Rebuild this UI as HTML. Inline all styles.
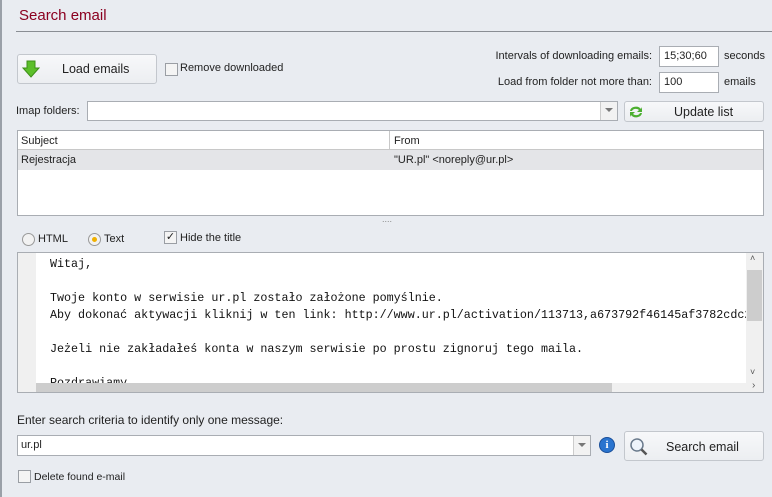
<!DOCTYPE html>
<html><head><meta charset="utf-8"><style>
*{box-sizing:border-box;margin:0;padding:0}
body{width:772px;height:497px;background:#e9ecf1;font-family:"Liberation Sans",sans-serif;font-size:11px;color:#222;position:relative;overflow:hidden}
.a{position:absolute;white-space:nowrap}
.btn{position:absolute;border:1px solid #c3c7cd;border-radius:3px;background:linear-gradient(#f7f8fa,#eceef1);font-size:12.5px}
.inp{position:absolute;background:#fff;border:1px solid #a9adb3}
.cb{position:absolute;width:13px;height:13px;border:1px solid #9a9ea4;background:#f4f4f4}
</style></head><body>
<div class="a" style="left:0;top:0;width:2px;height:497px;background:#9aa0a8"></div>
<div class="a" style="left:19px;top:7px;font-size:15px;color:#8b0020">Search email</div>
<div class="a" style="left:16px;top:31px;width:756px;height:1px;background:#8a8e94"></div>

<div class="btn" style="left:17px;top:54px;width:140px;height:30px">
<svg class="a" style="left:4px;top:5px" width="18" height="18" viewBox="0 0 18 18"><path d="M5 1h8v7h4l-8 9-8-9h4z" fill="#5cbf2a" stroke="#3d8f18" stroke-width="1"/></svg>
<span class="a" style="left:44px;top:7px">Load emails</span></div>
<div class="cb" style="left:165px;top:63px"></div>
<div class="a" style="left:180px;top:62px">Remove downloaded</div>

<div class="a" style="right:120px;top:50px">Intervals of downloading emails:</div>
<div class="inp" style="left:659px;top:46px;width:60px;height:21px"><span class="a" style="left:4px;top:3px">15;30;60</span></div>
<div class="a" style="left:724px;top:50px">seconds</div>
<div class="a" style="right:120px;top:76px">Load from folder not more than:</div>
<div class="inp" style="left:659px;top:72px;width:60px;height:21px"><span class="a" style="left:4px;top:3px">100</span></div>
<div class="a" style="left:724px;top:76px">emails</div>

<div class="a" style="left:16px;top:105px">Imap folders:</div>
<div class="inp" style="left:87px;top:101px;width:531px;height:20px"><div class="a" style="right:0;top:0;width:17px;height:18px;border-left:1px solid #ccc;background:#f2f2f2"><span class="a" style="left:4px;top:6px;border:4px solid transparent;border-top:4px solid #777;border-bottom:0"></span></div></div>
<div class="btn" style="left:624px;top:101px;width:140px;height:21px">
<svg class="a" style="left:3px;top:2px" width="16" height="16" viewBox="0 0 16 16"><path d="M2 7a6 5 0 0 1 11-2l1-2v5h-5l2-2a4 3 0 0 0-7 1z" fill="#4caf30"/><path d="M14 9a6 5 0 0 1-11 2l-1 2V8h5l-2 2a4 3 0 0 0 7-1z" fill="#4caf30"/></svg>
<span class="a" style="left:49px;top:3px">Update list</span></div>

<div class="a" style="left:17px;top:130px;width:747px;height:86px;background:#fff;border:1px solid #a9adb3"></div>
<div class="a" style="left:18px;top:131px;width:745px;height:19px;background:#fff;border-bottom:1px solid #c8c8c8"></div>
<div class="a" style="left:389px;top:131px;width:1px;height:19px;background:#c8c8c8"></div>
<div class="a" style="left:21px;top:135px">Subject</div>
<div class="a" style="left:394px;top:135px">From</div>
<div class="a" style="left:18px;top:150px;width:745px;height:20px;background:#e4e5e8"></div>
<div class="a" style="left:21px;top:154px">Rejestracja</div>
<div class="a" style="left:394px;top:154px">"UR.pl" &lt;noreply@ur.pl&gt;</div>
<div class="a" style="left:382px;top:214px;font-size:9px;color:#888">....</div>

<div class="a" style="left:22px;top:233px;width:13px;height:13px;border-radius:50%;border:1px solid #999;background:#f2f2f2"></div>
<div class="a" style="left:38px;top:233px">HTML</div>
<div class="a" style="left:88px;top:233px;width:13px;height:13px;border-radius:50%;border:1px solid #999;background:#f2f2f2"><div class="a" style="left:3px;top:3px;width:5px;height:5px;border-radius:50%;background:#f0b000"></div></div>
<div class="a" style="left:104px;top:233px">Text</div>
<div class="cb" style="left:164px;top:231px;font-size:11px;line-height:10px;text-align:center">✓</div>
<div class="a" style="left:180px;top:232px">Hide the title</div>

<div class="a" style="left:17px;top:252px;width:747px;height:141px;background:#fff;border:1px solid #a9adb3;overflow:hidden">
<div class="a" style="left:0;top:0;width:18px;height:130px;background:#f0f0f0"></div>
<pre class="a" style="left:32px;top:3px;white-space:pre;font-family:'Liberation Mono',monospace;font-size:11.7px;line-height:17px;color:#111">Witaj,

Twoje konto w serwisie ur.pl zostało założone pomyślnie.
Aby dokonać aktywacji kliknij w ten link: http://www.ur.pl/activation/113713,a673792f46145af3782cdc2

Jeżeli nie zakładałeś konta w naszym serwisie po prostu zignoruj tego maila.

Pozdrawiamy</pre>
<div class="a" style="left:728px;top:0;width:17px;height:130px;background:#f0f0f0"><div class="a" style="left:1px;top:17px;width:15px;height:51px;background:#cdcdcd"></div><span class="a" style="left:4px;top:0;font-size:9px;color:#555">˄</span><span class="a" style="left:4px;top:114px;font-size:9px;color:#555">˅</span></div>
<div class="a" style="left:0;top:130px;width:745px;height:10px;background:#f0f0f0"><div class="a" style="left:18px;top:0;width:576px;height:10px;background:#cdcdcd"></div><span class="a" style="left:734px;top:-3px;font-size:10px;color:#555">›</span></div>
</div>

<div class="a" style="left:17px;top:413px;font-size:12px">Enter search criteria to identify only one message:</div>
<div class="inp" style="left:17px;top:435px;width:574px;height:21px"><span class="a" style="left:3px;top:3px">ur.pl</span><div class="a" style="right:0;top:0;width:17px;height:19px;border-left:1px solid #ccc;background:#f2f2f2"><span class="a" style="left:4px;top:7px;border:4px solid transparent;border-top:4px solid #777;border-bottom:0"></span></div></div>
<div class="a" style="left:599px;top:437px;width:16px;height:16px;border-radius:50%;background:#2a74cf;border:1px solid #1a4f9a;color:#fff;font:bold 11px 'Liberation Serif',serif;text-align:center;line-height:14px">i</div>
<div class="btn" style="left:624px;top:431px;width:140px;height:30px">
<svg class="a" style="left:4px;top:5px" width="20" height="20" viewBox="0 0 20 20"><circle cx="8" cy="8" r="6" fill="#eef4fb" stroke="#6a7a8c" stroke-width="1.5"/><path d="M12.5 12.5l5 5" stroke="#555" stroke-width="2.5"/></svg>
<span class="a" style="left:41px;top:8px">Search email</span></div>
<div class="cb" style="left:18px;top:470px"></div>
<div class="a" style="left:34px;top:471px;font-size:10.5px">Delete found e-mail</div>
</body></html>
